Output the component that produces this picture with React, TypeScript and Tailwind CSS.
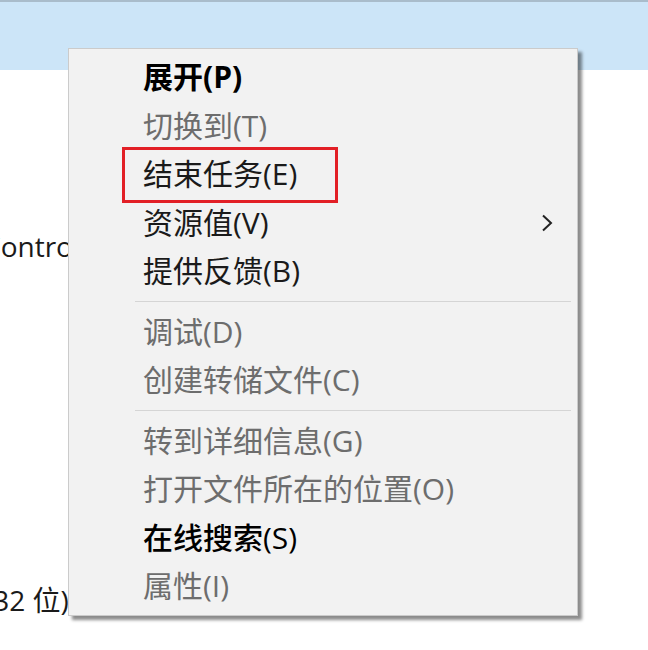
import { Fragment } from 'react'

type Item = {
  label: string
  key: string
  tone: 'bold' | 'normal' | 'muted' | 'strong'
  submenu?: boolean
}

const groups: Item[][] = [
  [
    { label: '展开', key: '(P)', tone: 'bold' },
    { label: '切换到', key: '(T)', tone: 'muted' },
    { label: '结束任务', key: '(E)', tone: 'normal' },
    { label: '资源值', key: '(V)', tone: 'normal', submenu: true },
    { label: '提供反馈', key: '(B)', tone: 'normal' },
  ],
  [
    { label: '调试', key: '(D)', tone: 'muted' },
    { label: '创建转储文件', key: '(C)', tone: 'muted' },
  ],
  [
    { label: '转到详细信息', key: '(G)', tone: 'muted' },
    { label: '打开文件所在的位置', key: '(O)', tone: 'muted' },
    { label: '在线搜索', key: '(S)', tone: 'strong' },
    { label: '属性', key: '(I)', tone: 'muted' },
  ],
]

const font = { fontFamily: '"Open Sans", "Noto Sans CJK SC", sans-serif' }

function MenuRow({ item }: { item: Item }) {
  const color =
    item.tone === 'muted' ? 'text-[#6d6d6d]' : item.tone === 'normal' ? 'text-[#1a1a1a]' : 'text-black'
  return (
    <div className="flex h-[48.5px] items-center justify-between pl-[74px] pr-[24px]">
      <span className={`text-[30px] leading-none ${color} ${item.tone === 'bold' ? 'font-bold' : ''}`}>
        <span className={item.tone === 'strong' ? 'font-medium' : ''}>{item.label}</span>
        {item.key}
      </span>
      {item.submenu && (
        <svg width="12" height="18" viewBox="0 0 12 18" className="text-[#222]">
          <polyline points="2,1.5 10,9 2,16.5" fill="none" stroke="currentColor" strokeWidth="2" />
        </svg>
      )}
    </div>
  )
}

export default function App() {
  return (
    <div className="relative h-[650px] w-[648px] overflow-hidden bg-white" style={font}>
      {/* list behind the menu */}
      <div className="h-[70px] border-t-2 border-[#a9bccb] bg-[#cce5f8]" />
      <div className="mt-[157px] ml-[-17px] text-[28px] leading-[38px] text-[#1a1a1a]">Control</div>
      <div className="mt-[316px] ml-[-15px] text-[28px] leading-[38px] text-[#1a1a1a]">(32 位)</div>

      {/* context menu */}
      <div className="absolute left-[68px] top-[48px] w-[510px] border border-[#cbcbcb] bg-[#f2f2f2] py-[4px] shadow-[4px_4px_3px_rgba(0,0,0,0.45)]">
        {groups.map((g, i) => (
          <Fragment key={i}>
            {i > 0 && (
              <div className="flex h-[12px] items-center pl-[66px] pr-[6px]">
                <div className="h-px w-full bg-[#d5d5d5]" />
              </div>
            )}
            {g.map((item) => (
              <MenuRow key={item.label} item={item} />
            ))}
          </Fragment>
        ))}
      </div>

      {/* highlight */}
      <div className="absolute left-[122px] top-[147px] h-[56px] w-[216px] border-[3px] border-[#e21f26]" />
    </div>
  )
}
